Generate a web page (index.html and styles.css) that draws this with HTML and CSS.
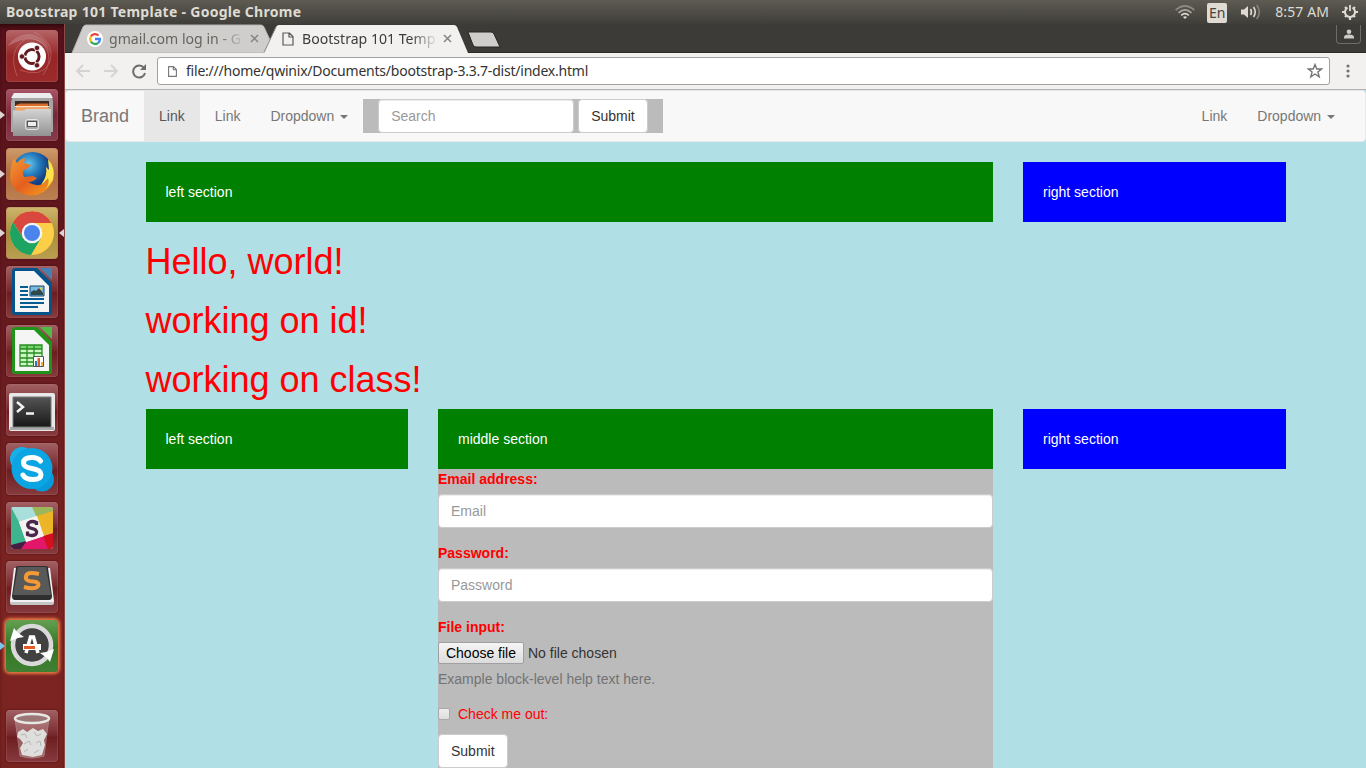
FILE: index.html
```html
<!DOCTYPE html>
<html lang="en">
<head>
<meta charset="utf-8">
<title>Bootstrap 101 Template</title>
<link rel="stylesheet" href="styles.css">
</head>
<body>
<div class="desktop">
  <header class="panel">
    <span class="panel-title">Bootstrap 101 Template - Google Chrome</span>
    <div class="indicators">
      <svg class="wifi" width="20" height="14" viewBox="0 0 20 14" fill="none" stroke-width="1.7"><path d="M.7 5Q10-3 19.3 5" stroke="#8b8981"/><path d="M3.5 7.800Q10 2 16.500 7.800" stroke="#aaa89f"/><path d="M6.200 10.300Q10 7 13.800 10.300" stroke="#dfdbd2"/><path d="M8 12L10 14 12 12Q10 10.400 8 12" fill="#dfdbd2"/></svg>
      <span class="lang">En</span>
      <svg class="sound" width="20" height="16" viewBox="0 0 20 16" fill="none" stroke="#dfdbd2" stroke-width="1.600"><path d="M0 5.500H3L7 2V14L3 10.500H0Z" fill="#dfdbd2" stroke="none"/><path d="M9.500 5Q11.500 8 9.500 11M12.500 3Q16 8 12.500 13"/><path d="M15.700 1Q21 8 15.700 15" stroke="#85827a"/></svg>
      <span class="clock">8:57 AM</span>
      <svg class="gear" width="16" height="16" viewBox="0 0 16 16" fill="none" stroke="#dfdbd2"><path d="M5.500 3.700A5 5 0 1 0 10.500 3.700" stroke-width="2"/><path d="M8 1V7" stroke-width="1.800"/><path d="M3 3L4.500 4.500M13 3L11.500 4.500M0 8H3M13 8H16M3 13L4.500 11.500M13 13L11.500 11.500M8 13V16" stroke-width="2.200"/></svg>
    </div>
  </header>
  <div class="workspace">
    <nav class="launcher">
      <div class="tile dash"><svg viewBox="0 0 52 52"><g fill="none" stroke="#e4a7a4" opacity=".35"><path d="M2 15Q27 2 39 16Q48 30 37 45"/><path d="M28 2Q51 14 43 34Q35 48 14 40"/><path d="M11 46Q1 20 20 9"/></g><path d="M3 15Q25 1 40 17L44 24Q42 6 23 4Q8 5 3 15" fill="#fff" opacity=".16"/><circle cx="26" cy="26.500" r="14" fill="#fff"/><circle cx="26" cy="26.500" r="6.800" fill="none" stroke="#641b1f" stroke-width="3.600"/><g stroke="#fff" stroke-width="1.300"><path d="M26 26.500L13 26.500M26 26.500L33 15.500M26 26.500L33 38.500"/></g><circle cx="26" cy="26.500" r="5.600" fill="#fff"/><g fill="#641b1f" stroke="#fff" stroke-width=".7"><circle cx="16" cy="26.500" r="2.700"/><circle cx="31" cy="17.900" r="2.700"/><circle cx="31" cy="35.300" r="2.700"/></g></svg></div>
      <div class="tile files running"><svg viewBox="0 0 52 52"><defs><linearGradient id="cab" x2="0" y2="1"><stop stop-color="#d4d4d4"/><stop offset="1" stop-color="#929292"/></linearGradient></defs><path d="M7 6Q7 4 10 4H42Q45 4 46 7L47 13V43H5V13Z" fill="#a6a6a6"/><path d="M8 4H44L47 9H5Z" fill="#ececec"/><path d="M9 12H43V24H9Z" fill="#3a2a22"/><path d="M10 16L14 14.500H42V24H9Z" fill="#d86c2c"/><path d="M9 17H43V18.500H9Z" fill="#ffe4c4"/><path d="M9 19H43V22H9Z" fill="#f0a35e"/><path d="M7 21.500H18L20 20H45V47H7Z" fill="url(#cab)"/><rect x="19.500" y="30.500" width="13" height="10" rx="2" fill="#a6a6a6" stroke="#e6e6e6"/><rect x="21.500" y="32.500" width="9" height="5" fill="#eee" stroke="#555"/></svg></div>
      <div class="tile firefox running"><svg viewBox="0 0 52 52"><defs><radialGradient id="globe" cx=".4" cy=".3"><stop stop-color="#69c7ea"/><stop offset=".55" stop-color="#2379bb"/><stop offset="1" stop-color="#153d82"/></radialGradient><linearGradient id="fox" x2="1" y2="1"><stop stop-color="#f39a32"/><stop offset=".5" stop-color="#e45f1f"/><stop offset="1" stop-color="#f8a51c"/></linearGradient></defs><circle cx="26.500" cy="24.500" r="20.500" fill="url(#globe)"/><path d="M44 14Q50 25 46 35Q38 48 24 47.500Q6 45 4 30Q4 18 8 10L11 15Q14 11 19 10L18 15L25 17Q23 20 18 22Q16 25 18 29L27 28L31 30Q27 34 22 34Q33 41 40 33Q43 28 44 14" fill="url(#fox)"/><path d="M42 11Q50 20 47 32L40 41Q44 34 42 30Q39 35 35 37Q42 27 40 19L43 22Z" fill="#ffe24a"/></svg></div>
      <div class="tile chrome running focused"><svg viewBox="0 0 52 52"><circle cx="26" cy="26" r="22" fill="#fdcf48"/><path d="M7 15A22 22 0 0 1 45.500 16H26L17 31Z" fill="#d8483e"/><path d="M7 15A22 22 0 0 0 25 48L35 31L26 36L17 31Z" fill="#1da462"/><circle cx="26" cy="26" r="10.300" fill="#f5f5f7"/><circle cx="26" cy="26" r="8" fill="#4a84ec"/></svg></div>
      <div class="tile office"><svg viewBox="0 0 52 52"><path d="M10 2H31L46 17V46Q46 49 43 49H9Q6 49 6 46V5Q6 2 10 2" fill="#04538a"/><path d="M9 5H28L43 20V46H9Z" fill="#f5f5f5"/><path d="M34 2H46V14Z" fill="#4681b1"/><g fill="#075c91"><path d="M14 20h8v2h-8zM14 24h8v2h-8zM14 28h8v2h-8zM14 32h24v2H14zM14 36h24v2H14zM14 40h18v2H14z"/></g><path d="M24 20H38V30H24Z" fill="#78b9df" stroke="#104872"/><path d="M25 29V26L28 24L30 25L33 22L37 27V29Z" fill="#304849"/><circle cx="35" cy="22.500" r="1.300" fill="#f4c543"/></svg></div>
      <div class="tile office"><svg viewBox="0 0 52 52"><path d="M10 2H31L46 17V46Q46 49 43 49H9Q6 49 6 46V5Q6 2 10 2" fill="#209419"/><path d="M9 5H28L43 20V46H9Z" fill="#f5f5f5"/><path d="M34 2H46V14Z" fill="#4fbb45"/><path d="M14 20H36V41H14Z" fill="#cafac1"/><path d="M14 20H36V24H14Z" fill="#77d66a"/><path d="M14 20H36V41H14ZM21 20V41M28 20V41M14 24H36M14 28H36M14 33H36M14 37H36" fill="none" stroke="#2a8b26" stroke-width="1.300"/><path d="M27.500 31.500H37.500V41.500H27.500Z" fill="#fff" stroke="#555"/><path d="M29 36h2v5h-2z" fill="#2879b5"/><path d="M31.500 33h2.500v8h-2.500z" fill="#df5b25"/><path d="M35 37h2v4h-2z" fill="#ecb52c"/></svg></div>
      <div class="tile terminal"><svg viewBox="0 0 52 52"><defs><linearGradient id="crt" x2="0" y2="1"><stop stop-color="#555"/><stop offset="1" stop-color="#171717"/></linearGradient></defs><rect x="3" y="9" width="46" height="38" rx="2" fill="#e8e8e8"/><path d="M4 43H48V46H4Z" fill="#aaa"/><path d="M7 13H45V43H7Z" fill="url(#crt)" stroke="#777"/><path d="M11 18L17 23L11 28M20 29.500H28" fill="none" stroke="#f4f4f4" stroke-width="2.500"/></svg></div>
      <div class="tile skype"><svg viewBox="0 0 52 52"><circle cx="16" cy="16" r="12" fill="#18aee8"/><circle cx="36" cy="36.500" r="12" fill="#0799da"/><circle cx="26" cy="25.500" r="20.500" fill="#0ba5e3"/><path d="M34.500 18Q32 14.500 26 14.500Q17.500 14.500 17.500 20Q17.500 24 26 25.500Q35 27 35 31.500Q35 36.500 27 36.500Q19.500 36.500 17 32" fill="none" stroke="#fff" stroke-width="5" stroke-linecap="round"/></svg></div>
      <div class="tile slack"><svg viewBox="0 0 52 52"><defs><clipPath id="sc"><rect x="5" y="5" width="42" height="42" rx="3"/></clipPath></defs><g clip-path="url(#sc)"><path d="M5 5h42v42H5z" fill="#f5f3ef"/><path d="M5 5H26L31 14L12 20L5 17Z" fill="#a8dfdb"/><path d="M26 5H47V11L31 16Z" fill="#9bb65b"/><path d="M31 14L47 9V31L37 34Z" fill="#ecb526"/><path d="M5 5L13 20L20 39L5 44Z" fill="#3eb58f"/><path d="M5 43L20 39L23 47H5Z" fill="#431e42"/><path d="M20 40L38 34L44 47H15Z" fill="#e21769"/><path d="M37 34L47 31V47H42Z" fill="#d3101d"/><path d="M13 20L31 14L38 34L20 40Z" fill="#f5f3ef"/></g><path d="M30.500 23V20.500Q26 18.500 23 20.500Q20.500 23 23 25.500L29 27.500Q32 30 29.500 32.500Q26 34.500 21.500 32.500V29.500" fill="none" stroke="#4a274c" stroke-width="3.300"/></svg></div>
      <div class="tile sublime"><svg viewBox="0 0 52 52"><path d="M8 7H44L48 40Q48 44 44 44H8Q4 44 4 40Z" fill="#f1f1f1"/><path d="M4 41H48V42Q48 44 44 44H8Q4 44 4 42Z" fill="#c5c5c5"/><path d="M12 5H40Q42 5 42 7L46 35Q46 39 43 39H9Q6 39 6 35L10 7Q10 5 12 5Z" fill="#2f2f2f"/><path d="M12 6H40L45 34H7Z" fill="#595959"/><path d="M33 13Q20 10 20 16Q19 20 27 20.500Q34 21 32 25Q29 29 18 26" fill="none" stroke="#f39a37" stroke-width="4"/></svg></div>
      <div class="tile updater running"><svg viewBox="0 0 52 52"><circle cx="26" cy="25" r="19" fill="#414141" stroke="#d9d9d9" stroke-width="4.500"/><path d="M4 21L8 8L11 12L18 17L12 18Z" fill="#fff"/><path d="M48 29L44 42L41 38L34 33L40 32Z" fill="#fff"/><path d="M20 33L24.500 17H27.500L32 33" fill="none" stroke="#fff" stroke-width="3.500"/><path d="M17 24H35V30H17Z" fill="#fff"/><path d="M18 26H29V29H18Z" fill="#e45b25"/></svg></div>
      <div class="tile trash"><svg viewBox="0 0 52 52"><path d="M9 8L14 46Q26 50 38 46L43 8" fill="#d8b4b4" opacity=".4" stroke="#ddd"/><ellipse cx="26" cy="8.500" rx="17" ry="4.500" fill="#9c7777" stroke="#e7e7e3" stroke-width="2.500"/><path d="M12 22L17 19L21 22L27 18L32 21L37 19L41 24L38 30L39 35L36 45L27 47L16 45L14 38L17 33L14 29L11 27Z" fill="#dededc"/><path d="M15 25L19 24L21 28M28 22L31 26L35 24M18 34L23 31L25 35M30 33L34 31L35 36M18 42L22 39M28 43L33 40" stroke="#b5b5b3" fill="none"/></svg></div>
    </nav>
    <main class="browser">
      <div class="tabstrip">
        <svg class="tab-shapes" width="450" height="29" viewBox="0 0 450 29"><path d="M0 28.500H450" stroke="#2b2a28"/><path d="M7 29L18 3Q19 1 21 1H196Q198 1 199 3L211 29Z" fill="#d0cecd" stroke="#b5b3b1"/><path d="M199 29L211 3Q212 1 214 1H389Q391 1 392 3L403 29Z" fill="#f2f1f0"/><path d="M199 28.500L211 3" fill="none" stroke="#8d8b88"/><path d="M403 8H426Q428 8 429 10L435 23H411Q409 23 408 21Z" fill="#d0cecd" stroke="#272624"/></svg>
        <div class="tab first"><svg class="google" width="16" height="16" viewBox="0 0 16 16"><circle cx="8" cy="8" r="8" fill="#fff"/><g fill="none" stroke-width="2.300"><path d="M3.800 5.500A5 5 0 0 1 11.500 4.500" stroke="#ea4335"/><path d="M3.800 5.500Q2.300 8 3.800 10.600" stroke="#fbbc05"/><path d="M3.800 10.600Q7 14.700 11.200 12" stroke="#34a853"/><path d="M8 8H13Q13 10.500 11.200 12" stroke="#4285f4"/></g></svg><span class="tab-name">gmail.com log in - G</span><svg class="x" width="9" height="9" viewBox="0 0 9 9"><path d="M1 1L8 8M8 1L1 8"/></svg></div>
        <div class="tab active"><svg width="12" height="14" viewBox="0 0 12 14"><path d="M1 1H7.500L11 4.500V13H1ZM7 1V5H11" fill="none" stroke="#5a5a5a" stroke-width="1.200"/></svg><span class="tab-name">Bootstrap 101 Temp</span><svg class="x" width="9" height="9" viewBox="0 0 9 9"><path d="M1 1L8 8M8 1L1 8"/></svg></div>
        <div class="profile"><svg width="10" height="10" viewBox="0 0 10 10" fill="#ccc"><circle cx="5" cy="2.700" r="2.300"/><path d="M0 9.500V7.500Q1 5.500 5 5.500T10 7.500V9.500Z"/></svg></div>
      </div>
      <div class="toolbar">
        <svg class="nav-icons" width="72" height="16" viewBox="0 0 72 16" fill="none" stroke-width="1.800"><path d="M15 8H2M8 2L2 8L8 14M29 8H42M36 2L42 8L36 14" stroke="#d6d4d2"/><path d="M69 5A6 6 0 1 0 70 10" stroke="#6f6d6b" stroke-width="2"/><path d="M71 1V7H65Z" fill="#6f6d6b"/></svg>
        <div class="omnibox"><svg width="9" height="11" viewBox="0 0 9 11"><path d="M.6.6H5.500L8.400 3.500V10.400H.6ZM5.300.6V3.700H8.400" fill="none" stroke="#777" stroke-width="1.100"/></svg><span class="url">file:///home/qwinix/Documents/bootstrap-3.3.7-dist/index.html</span><svg class="star" width="16" height="16" viewBox="0 0 16 16"><path d="M8 1.500L9.800 6H14.500L10.900 9L12.200 13.800L8 11L3.800 13.800L5.100 9L1.500 6H6.200Z" fill="none" stroke="#737373" stroke-width="1.400"/></svg></div>
        <svg class="menu" width="4" height="14" viewBox="0 0 4 14" fill="#737373"><circle cx="2" cy="2" r="1.600"/><circle cx="2" cy="7" r="1.600"/><circle cx="2" cy="12" r="1.600"/></svg>
      </div>
      <div class="page">
        <nav class="navbar">
          <a class="brand">Brand</a><a class="link current">Link</a><a class="link">Link</a><a class="link">Dropdown <b class="caret"></b></a>
          <form class="search"><input class="control" placeholder="Search"><button class="btn" type="button">Submit</button></form>
          <div class="nav-right"><a class="link">Link</a><a class="link">Dropdown <b class="caret"></b></a></div>
        </nav>
        <div class="container">
          <div class="row"><div class="section green wide">left section</div><div class="section blue">right section</div></div>
          <h1>Hello, world!</h1><h1>working on id!</h1><h1>working on class!</h1>
          <div class="row lower">
            <div class="section green">left section</div>
            <div class="middle">
              <div class="section green">middle section</div>
              <form class="details">
                <div class="group"><label>Email address:</label><input class="control" placeholder="Email"></div>
                <div class="group"><label>Password:</label><input class="control" placeholder="Password"></div>
                <div class="group"><label>File input:</label><div class="file"><span class="choose">Choose file</span><span>No file chosen</span></div><p class="help">Example block-level help text here.</p></div>
                <div class="check"><span class="box"></span><span>Check me out:</span></div>
                <button class="btn" type="button">Submit</button>
              </form>
            </div>
            <div class="section blue">right section</div>
          </div>
        </div>
      </div>
    </main>
  </div>
</div>
</body>
</html>
```
FILE: styles.css
```css
* { box-sizing: border-box; }
body { margin: 0; overflow: hidden; font: 14px/20px "Liberation Sans", Arial, sans-serif; color: #333; }
svg { display: block; flex: none; }
.desktop { width: 1366px; height: 768px; display: flex; flex-direction: column; overflow: hidden; }
.panel { height: 24px; flex: none; display: flex; align-items: center; justify-content: space-between; padding: 0 8px 0 6px; background: linear-gradient(#5d5b52, #3f3e39); color: #dfdbd2; font-family: "Noto Sans", sans-serif; white-space: nowrap; }
.panel-title { font-size: 14px; font-weight: 700; letter-spacing: .28px; }
.indicators { display: flex; align-items: center; }
.lang { width: 20px; height: 20px; margin: 1px 14px 0 12px; border-radius: 2px; background: #dfdbd2; color: #454440; font-size: 14px; line-height: 19px; text-align: center; }
.clock { margin: 0 13px 0 14px; font-size: 14px; letter-spacing: .1px; }
.workspace { flex: 1; min-height: 0; display: flex; }
.launcher { width: 65px; flex: none; padding: 6px 7px 6px 6px; display: flex; flex-direction: column; gap: 7px; background: linear-gradient(#56111a, #661a1f 40%, #7d2422 75%, #792321); border-right: 1px solid #8b4b4b; box-shadow: inset 0 4px 4px -2px #28070a; }
.tile { position: relative; width: 52px; height: 52px; flex: none; border-radius: 4px; background: linear-gradient(#a26165, #76282b 48%, #6d1d20 52%, #873b3e); box-shadow: inset 0 0 0 1px #b26f724d, 0 0 2px #3c0b0d; }
.tile svg { width: 52px; height: 52px; }
.dash { background: linear-gradient(#b56568, #962525 50%, #9c2b2c); }
.files { background: linear-gradient(#a75567, #772537 50%, #863d4d); }
.firefox { background: linear-gradient(#d09b6c, #ae6e3e 50%, #bc8052); }
.chrome { background: linear-gradient(#cfb66b, #aa8d3b 50%, #ba9f50); }
.updater { background: linear-gradient(#64a052, #347525 50%, #408032); box-shadow: 0 0 3px 2px #e77a44; }
.trash { margin-top: auto; }
.running::before { content: ""; position: absolute; left: -6px; top: 22px; border: 4px solid transparent; border-left: 5px solid #ded4d4; border-right: 0; }
.updater::before { border-left-color: #7bc6ed; }
.focused::after { content: ""; position: absolute; right: -6px; top: 22px; border: 4px solid transparent; border-right: 5px solid #ded4d4; border-left: 0; }
.browser { flex: 1; min-width: 0; display: flex; flex-direction: column; background: #f2f1f0; }
.tabstrip { position: relative; height: 29px; flex: none; display: flex; background: #3c3b37; border-bottom: 1px solid #2b2a28; font-family: "Noto Sans", sans-serif; }
.tab-shapes { position: absolute; left: 0; top: 0; }
.tab { position: relative; width: 193px; height: 29px; flex: none; display: flex; align-items: center; white-space: nowrap; color: #66645f; }
.first { margin-left: 22px; }
.active { padding-left: 2px; color: #3d3c39; }
.tab-name { width: 136px; margin: 0 5px 0 6px; font-size: 14.1px; -webkit-mask-image: linear-gradient(90deg, #000 80%, transparent); mask-image: linear-gradient(90deg, #000 80%, transparent); }
.active .tab-name { margin-left: 8px; }
.x { stroke: #858480; stroke-width: 1.5; }
.profile { width: 25px; height: 19px; margin: 1px 5px 0 auto; display: flex; align-items: center; justify-content: center; border: 1px solid #6e6d67; border-top: 0; border-radius: 0 0 4px 4px; }
.toolbar { height: 37px; flex: none; display: flex; align-items: center; padding: 0 16px 0 10px; border-bottom: 1px solid #b4b2af; }
.omnibox { height: 28px; width: 1173px; margin: 0 16px 0 10px; padding: 0 6px 0 10px; display: flex; align-items: center; border: 1px solid #a3a09d; border-radius: 3px; background: #fff; }
.url { margin-left: 9px; font: 14px/20px "Noto Sans", sans-serif; letter-spacing: -.22px; white-space: nowrap; }
.star { margin-left: auto; }
.page { flex: 1; min-height: 0; overflow: hidden; background: #b0e0e6; }
.navbar { height: 52px; margin-bottom: 20px; display: flex; background: #f8f8f8; border: 1px solid #e7e7e7; border-radius: 4px; color: #777; }
.brand { padding: 15px; font-size: 18px; line-height: 20px; }
.link { padding: 15px; line-height: 20px; }
.current { background: #e7e7e7; color: #555; }
.caret { display: inline-block; margin-left: 2px; vertical-align: middle; border: 4px solid transparent; border-top-color: #777; border-bottom: 0; }
.search { width: 300px; height: 34px; margin: 8px 0; padding: 0 15px; display: flex; gap: 4px; background: #bbb; }
.search .control { width: 196px; }
.nav-right { margin: 0 15px 0 auto; display: flex; }
.control { display: block; width: 100%; height: 34px; padding: 6px 12px; border: 1px solid #ccc; border-radius: 4px; background: #fff; box-shadow: inset 0 1px 1px rgba(0,0,0,.075); font: inherit; }
.control::placeholder { color: #999; opacity: 1; }
.btn { height: 34px; padding: 6px 12px; border: 1px solid #ccc; border-radius: 4px; background: #fff; color: #333; font: inherit; }
.container { width: 1140px; margin: 0 auto; }
.row { display: flex; gap: 30px; align-items: flex-start; }
.section { width: 262.5px; height: 60px; flex: none; padding: 20px; color: #fff; }
.green { background: #008000; }
.blue { background: #00f; }
.wide { width: 847.5px; }
.middle { width: 555px; flex: none; }
.middle .section { width: 100%; }
h1 { margin: 20px 0; font-size: 36px; line-height: 39px; font-weight: 500; color: #f00; }
.lower { margin-top: -10px; }
.details { background: #bbb; }
.group { margin-bottom: 15px; }
label { display: block; margin-bottom: 5px; font-weight: 700; color: #f00; }
.file { height: 22px; display: flex; align-items: center; gap: 4px; }
.choose { height: 22px; width: 86px; border: 1px solid #a0a0a0; border-radius: 2px; background: linear-gradient(#f5f5f5, #dcdcdc); color: #000; text-align: center; }
.help { margin: 5px 0 15px; color: #737373; }
.check { margin-bottom: 10px; display: flex; align-items: center; color: #f00; }
.box { width: 12px; height: 12px; margin-right: 8px; border: 1px solid #aaa; border-radius: 2px; background: linear-gradient(#eee, #ddd); }
```
